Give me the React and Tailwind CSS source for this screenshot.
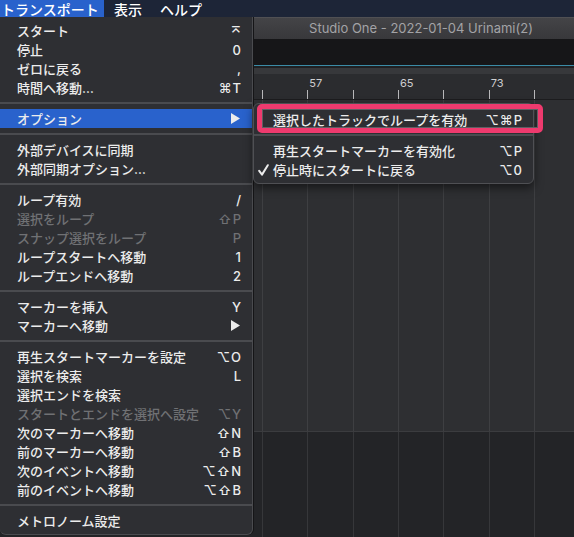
import React from "react";

const JP = "font-['Inter','Noto_Sans_CJK_JP',sans-serif]";
const KEY = "font-['Inter','DejaVu_Sans','Noto_Sans_CJK_JP',sans-serif]";

const items = [
  { t: "スタート", k: "⌅" },
  { t: "停止", k: "0" },
  { t: "ゼロに戻る", k: "," },
  { t: "時間へ移動…", k: "⌘T" },
  "sep",
  { t: "オプション", arrow: true, active: true },
  "sep",
  { t: "外部デバイスに同期" },
  { t: "外部同期オプション…" },
  "sep",
  { t: "ループ有効", k: "/" },
  { t: "選択をループ", k: "⇧P", dis: true },
  { t: "スナップ選択をループ", k: "P", dis: true },
  { t: "ループスタートへ移動", k: "1" },
  { t: "ループエンドへ移動", k: "2" },
  "sep",
  { t: "マーカーを挿入", k: "Y" },
  { t: "マーカーへ移動", arrow: true },
  "sep",
  { t: "再生スタートマーカーを設定", k: "⌥O" },
  { t: "選択を検索", k: "L" },
  { t: "選択エンドを検索" },
  { t: "スタートとエンドを選択へ設定", k: "⌥Y", dis: true },
  { t: "次のマーカーへ移動", k: "⇧N" },
  { t: "前のマーカーへ移動", k: "⇧B" },
  { t: "次のイベントへ移動", k: "⌥⇧N" },
  { t: "前のイベントへ移動", k: "⌥⇧B" },
  "sep",
  { t: "メトロノーム設定" },
];

function Arrow() {
  return (
    <svg width="9" height="11" viewBox="0 0 9 11" className="block">
      <path d="M0 0 L9 5.5 L0 11 Z" fill="#ececec" />
    </svg>
  );
}

function Sep() {
  return (
    <div className="h-[12px] flex items-center">
      <div className="h-[2px] w-full bg-[#4a4b4f]" />
    </div>
  );
}

function MainMenu() {
  return (
    <div className="absolute left-0 top-[17px] w-[253px] pt-[4px] pb-[4px] bg-[#2e2f33] border-r border-b border-[#4a4b4f] rounded-b-[6px] shadow-[1px_0_0_#151517]">
      {items.map((it, i) =>
        it === "sep" ? (
          <Sep key={i} />
        ) : (
          <div
            key={i}
            className={`h-[19px] flex items-center justify-between pl-[17px] pr-[10px] ${
              it.active ? "bg-[#2962cc]" : ""
            } ${it.dis ? "text-[#707174]" : "text-[#ececec]"}`}
          >
            <span className={`${JP} text-[13px] leading-none font-medium pt-[2px]`}>{it.t}</span>
            {it.arrow ? (
              <span className="pr-[2px]">
                <Arrow />
              </span>
            ) : it.k ? (
              <span className={`${KEY} text-[13px] leading-none font-medium tracking-[1px] pt-[1px]`}>{it.k}</span>
            ) : null}
          </div>
        )
      )}
    </div>
  );
}

function SubMenu() {
  return (
    <div className="absolute left-[253px] top-[103px] w-[281px] pt-[6px] pb-[4px] bg-[#2e2f33] border border-[#4f5054] rounded-[6px] shadow-[0_4px_10px_rgba(0,0,0,0.5)]">
      <div className="h-[19px] flex items-center justify-between pl-[19px] pr-[10px] text-[#ececec]">
        <span className={`${JP} text-[13px] leading-none font-medium pt-[2px]`}>選択したトラックでループを有効</span>
        <span className={`${KEY} text-[13px] leading-none font-medium tracking-[1px] pt-[1px]`}>⌥⌘P</span>
      </div>
      <div className="h-[12px] flex items-center">
        <div className="h-[2px] w-full bg-[#4a4b4f]" />
      </div>
      <div className="h-[19px] flex items-center justify-between pl-[19px] pr-[10px] text-[#ececec]">
        <span className={`${JP} text-[13px] leading-none font-medium pt-[2px]`}>再生スタートマーカーを有効化</span>
        <span className={`${KEY} text-[13px] leading-none font-medium tracking-[1px] pt-[1px]`}>⌥P</span>
      </div>
      <div className="h-[19px] flex items-center justify-between pl-[4px] pr-[10px] text-[#ececec]">
        <span className="flex items-center">
          <svg width="11" height="12" viewBox="0 0 11 12" className="block mr-[4px]">
            <path d="M1.2 6.8 L4 10.6 L9.8 1.2" stroke="#ececec" strokeWidth="2" fill="none" strokeLinecap="round" strokeLinejoin="round" />
          </svg>
          <span className={`${JP} text-[13px] leading-none font-medium pt-[2px]`}>停止時にスタートに戻る</span>
        </span>
        <span className={`${KEY} text-[13px] leading-none font-medium tracking-[1px] pt-[1px]`}>⌥0</span>
      </div>
    </div>
  );
}

const cols = [0, 1, 2, 3, 4, 5, 6, 7];
const labels = { 1: "57", 3: "65", 5: "73" };

export default function App() {
  return (
    <div className="relative w-[574px] h-[537px] overflow-hidden bg-[#232427]">
      {/* menu bar */}
      <div className={`h-[17px] bg-[#1d2537] flex items-center text-[14px] text-white ${JP} font-medium`}>
        <div className="h-full w-[104px] pl-[1px] pt-[2px] bg-[#2962cc] flex items-center leading-none">トランスポート</div>
        <div className="ml-[10px] pt-[2px] leading-none">表示</div>
        <div className="ml-[18px] pt-[2px] leading-none">ヘルプ</div>
      </div>

      {/* DAW window */}
      <div className="flex flex-col">
        <div className="h-[22px] bg-gradient-to-b from-[#444447] to-[#38383b] border-t border-[#505053] flex items-center justify-center pl-[268px]">
          <span className="font-['Inter',sans-serif] text-[13px] text-[#a3a3a6] leading-none">Studio One - 2022-01-04 Urinami(2)</span>
        </div>
        <div className="h-[26px] bg-[#161618]" />
        <div className="h-px bg-[#3b8ba6]" />
        <div className="h-[2px] bg-[#1f2022]" />
        <div className="h-[6px] bg-[#37383b]" />
        {/* ruler */}
        <div className="h-[26px] bg-[#2b2c2f] border-b border-[#1c1c1e] flex pl-[262px]">
          {cols.map((c) => (
            <div key={c} className="w-[45.33px] shrink-0 flex flex-col justify-between">
              <div className="h-[15px] pl-[2px] pt-[4px] font-['Inter',sans-serif] text-[11px] leading-none text-[#cfcfd1]">
                {labels[c] || ""}
              </div>
              <div className="w-px h-[9px] bg-[#b8b8ba]" />
            </div>
          ))}
        </div>
        {/* grid */}
        <div className="h-[332px] bg-[#2e2f32] flex pl-[262px] border-b border-[#3b3c3f]">
          {cols.map((c) => (
            <div key={c} className="w-[45.33px] shrink-0 border-l border-[#3e3f42]" />
          ))}
        </div>
        <div className="h-[110px] bg-[#232427] flex pl-[262px]">
          {cols.map((c) => (
            <div key={c} className="w-[45.33px] shrink-0 border-l border-[#36373a]" />
          ))}
        </div>
      </div>

      <MainMenu />
      <SubMenu />

      {/* annotation */}
      <div className="absolute left-[257px] top-[104px] w-[286px] h-[29px] border-[5px] border-[#ee3a6e] rounded-[5px]">
        <div className="w-full h-full border border-[#5e5f63]" />
      </div>
    </div>
  );
}
